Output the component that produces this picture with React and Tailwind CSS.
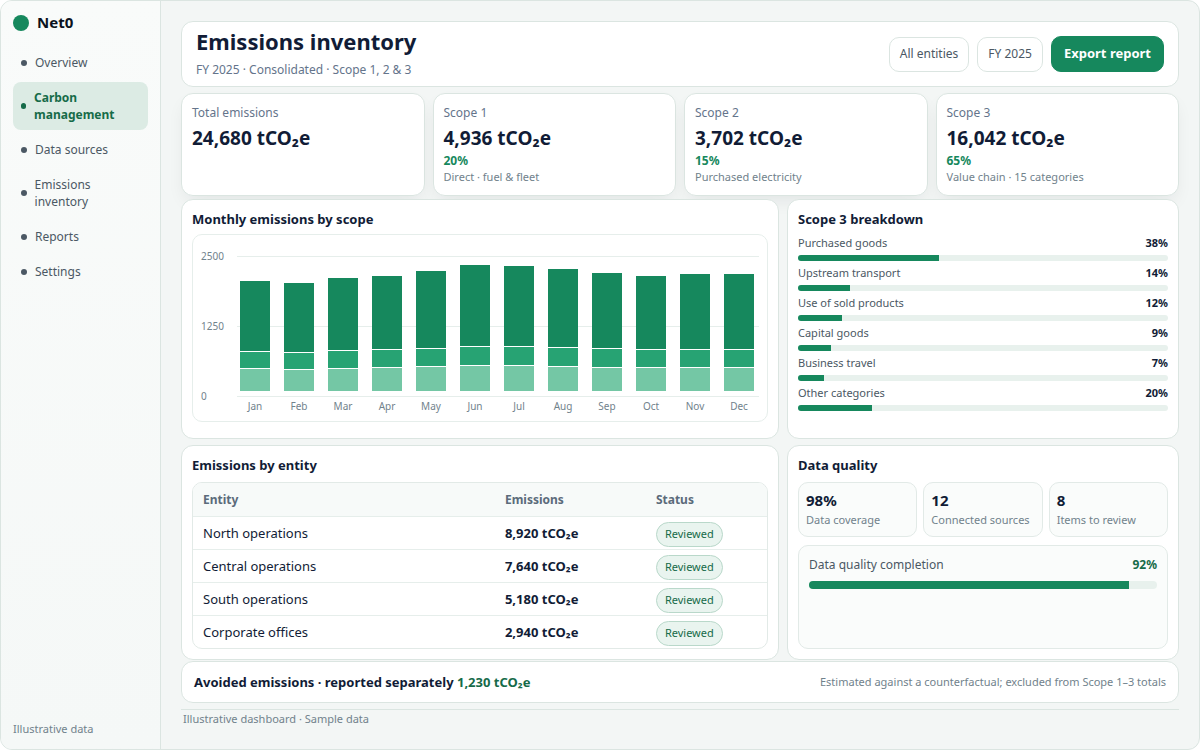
const NAV = [
  { label: 'Overview' },
  { label: 'Carbon management', active: true },
  { label: 'Data sources' },
  { label: 'Emissions inventory' },
  { label: 'Reports' },
  { label: 'Settings' },
];

const KPIS = [
  { label: 'Total emissions', value: '24,680 tCO₂e' },
  { label: 'Scope 1', value: '4,936 tCO₂e', share: '20%', note: 'Direct · fuel & fleet' },
  { label: 'Scope 2', value: '3,702 tCO₂e', share: '15%', note: 'Purchased electricity' },
  { label: 'Scope 3', value: '16,042 tCO₂e', share: '65%', note: 'Value chain · 15 categories' },
];

// segment heights per month: scope 1, scope 2, scope 3
const MONTHS = [
  { name: 'Jan', s1: 22, s2: 16, s3: 70 },
  { name: 'Feb', s1: 21, s2: 16, s3: 69 },
  { name: 'Mar', s1: 22, s2: 17, s3: 72 },
  { name: 'Apr', s1: 23, s2: 17, s3: 73 },
  { name: 'May', s1: 24, s2: 17, s3: 77 },
  { name: 'Jun', s1: 25, s2: 18, s3: 81 },
  { name: 'Jul', s1: 25, s2: 18, s3: 80 },
  { name: 'Aug', s1: 24, s2: 18, s3: 78 },
  { name: 'Sep', s1: 23, s2: 18, s3: 75 },
  { name: 'Oct', s1: 23, s2: 17, s3: 73 },
  { name: 'Nov', s1: 23, s2: 17, s3: 75 },
  { name: 'Dec', s1: 23, s2: 17, s3: 75 },
];

const TICKS = [
  { label: '2500', y: 21 },
  { label: '1250', y: 91 },
  { label: '0', y: 161 },
];

const BREAKDOWN = [
  { label: 'Purchased goods', pct: 38 },
  { label: 'Upstream transport', pct: 14 },
  { label: 'Use of sold products', pct: 12 },
  { label: 'Capital goods', pct: 9 },
  { label: 'Business travel', pct: 7 },
  { label: 'Other categories', pct: 20 },
];

const ENTITIES = [
  { name: 'North operations', value: '8,920 tCO₂e' },
  { name: 'Central operations', value: '7,640 tCO₂e' },
  { name: 'South operations', value: '5,180 tCO₂e' },
  { name: 'Corporate offices', value: '2,940 tCO₂e' },
];

const QUALITY = [
  { value: '98%', label: 'Data coverage' },
  { value: '12', label: 'Connected sources' },
  { value: '8', label: 'Items to review' },
];

const BASE = 156;

function Card({ as: Tag = 'section', className = '', children }) {
  return (
    <Tag className={`bg-white border border-[#dbe5e1] rounded-xl ${className}`}>
      {children}
    </Tag>
  );
}

function PanelTitle({ children }) {
  return <h2 className="text-[13px] leading-[18px] font-bold">{children}</h2>;
}

function Sidebar() {
  return (
    <aside className="w-40 shrink-0 flex flex-col p-3 border-r border-[#dbe5e1] bg-linear-to-b from-[#f9fbfa] to-[#f5f8f7]">
      <div className="flex items-center gap-2 h-5 mb-3.5">
        <span className="w-4 h-4 rounded-full bg-[#16885d]" />
        <span className="self-start text-[15px] leading-[18px] font-bold text-[#0b1220]">Net0</span>
      </div>

      <nav className="flex flex-col gap-1">
        {NAV.map((item) => (
          <a
            key={item.label}
            href="#"
            aria-current={item.active ? 'page' : undefined}
            className={`flex items-center gap-2 px-2 py-[7px] rounded-lg text-xs leading-[17px] ${
              item.active ? 'bg-[#dcebe4] text-[#166b49] font-bold' : 'text-[#4b5864]'
            }`}
          >
            <span className="w-1.5 h-1.5 rounded-full bg-current" />
            <span>{item.label}</span>
          </a>
        ))}
      </nav>

      <p className="mt-auto text-[11px] leading-[17px] text-[#71828c]">Illustrative data</p>
    </aside>
  );
}

function Header() {
  return (
    <Card as="header" className="flex items-center justify-between px-3.5 py-[7px]">
      <div className="pb-px">
        <h1 className="text-[22px] leading-[25px] font-bold">Emissions inventory</h1>
        <p className="mt-[7px] text-xs leading-[17px] text-[#64748b]">FY 2025 · Consolidated · Scope 1, 2 &amp; 3</p>
      </div>
      <div className="flex items-center gap-2">
        <button type="button" className="px-2.5 h-[35px] rounded-[10px] border border-[#dbe5e1] bg-white text-xs text-[#4b5864]">
          All entities
        </button>
        <button type="button" className="px-2.5 h-[35px] rounded-[10px] border border-[#dbe5e1] bg-white text-xs text-[#4b5864]">
          FY 2025
        </button>
        <button type="button" className="px-3 h-9 rounded-[10px] border border-[#16885d] bg-[#16885d] text-[13px] font-bold text-white">
          Export report
        </button>
      </div>
    </Card>
  );
}

function EmissionsChart() {
  return (
    <svg viewBox="0 0 574 186" className="block w-full" role="img" aria-label="Monthly emissions by scope">
      {TICKS.map((t) => (
        <g key={t.label}>
          <rect x="44" y={t.y} width="522" height="1" fill="#e6eeeb" />
          <text x="8" y={t.y + 4} fontSize="10" fill="#71828c">{t.label}</text>
        </g>
      ))}
      {MONTHS.map((m, i) => {
        const x = 47 + i * 44;
        const y1 = BASE - m.s1;
        const y2 = y1 - 1 - m.s2;
        const y3 = y2 - 1 - m.s3;
        return (
          <g key={m.name}>
            <rect x={x} y={y3} width="30" height={BASE - y3} fill="#ffffff" />
            <rect x={x} y={y1} width="30" height={m.s1} fill="#74c7a5" />
            <rect x={x} y={y2} width="30" height={m.s2} fill="#27a373" />
            <rect x={x} y={y3} width="30" height={m.s3} fill="#16885d" />
            <text x={x + 15} y="175" fontSize="10" textAnchor="middle" fill="#71828c">{m.name}</text>
          </g>
        );
      })}
    </svg>
  );
}

export default function App() {
  return (
    <div className="min-h-screen flex rounded-xl border border-[#dbe5e1] bg-[#f3f6f5] overflow-hidden text-[#111c36] font-['Noto_Sans',sans-serif]">
      <Sidebar />

      <main className="flex-1 min-w-0 flex flex-col p-5">
        <Header />

        {/* Headline figures */}
        <div className="grid grid-cols-4 gap-2 mt-1.5">
          {KPIS.map((k) => (
            <Card key={k.label} className="p-2.5 shadow-[0_8px_18px_-4px_rgba(15,23,42,0.08)]">
              <h2 className="text-xs leading-[17px] text-[#64748b]">{k.label}</h2>
              <p className="mt-[3px] text-[19px] leading-[29px] font-bold">{k.value}</p>
              {k.share && (
                <>
                  <p className="text-xs leading-[15px] font-bold text-[#16885d]">{k.share}</p>
                  <p className="mt-px text-[11px] leading-4 text-[#71828c]">{k.note}</p>
                </>
              )}
            </Card>
          ))}
        </div>

        <div className="grid grid-cols-[598fr_392fr] gap-x-2 gap-y-1.5 mt-[3px]">
          <Card className="px-2.5 pt-2.5 pb-4">
            <PanelTitle>Monthly emissions by scope</PanelTitle>
            <div className="mt-1.5 rounded-[10px] border border-[#e6eeeb]">
              <EmissionsChart />
            </div>
          </Card>

          <Card className="p-2.5">
            <PanelTitle>Scope 3 breakdown</PanelTitle>
            <ul className="mt-1.5 flex flex-col gap-[3px]">
              {BREAKDOWN.map((b) => (
                <li key={b.label}>
                  <div className="flex justify-between text-[11px] leading-[17px]">
                    <span className="text-[#4b5864]">{b.label}</span>
                    <strong>{b.pct}%</strong>
                  </div>
                  <div className="mt-1 h-1.5 rounded-full bg-[#e8f1ed] overflow-hidden">
                    <div className="h-full bg-[#16885d]" style={{ width: `${b.pct}%` }} />
                  </div>
                </li>
              ))}
            </ul>
          </Card>

          <Card className="p-2.5">
            <PanelTitle>Emissions by entity</PanelTitle>
            <div className="mt-2 rounded-[10px] border border-[#e2eae7] overflow-hidden">
              <table className="w-full table-fixed border-separate border-spacing-0 text-left text-[13px]">
                <colgroup>
                  <col className="w-[52.6%]" />
                  <col className="w-[26.3%]" />
                  <col />
                </colgroup>
                <thead>
                  <tr className="h-[34px] bg-[#f7faf9] text-xs text-[#5b6b7b]">
                    <th className="px-2.5 border-b border-[#e6eeeb] font-bold">Entity</th>
                    <th className="px-2.5 border-b border-[#e6eeeb] font-bold">Emissions</th>
                    <th className="px-2.5 border-b border-[#e6eeeb] font-bold">Status</th>
                  </tr>
                </thead>
                <tbody className="[&>tr:last-child]:h-8 [&>tr:last-child>td]:border-b-0">
                  {ENTITIES.map((e) => (
                    <tr key={e.name} className="h-[33px]">
                      <td className="px-2.5 pt-px border-b border-[#e6eeeb]">{e.name}</td>
                      <td className="px-2.5 pt-px border-b border-[#e6eeeb] font-bold">{e.value}</td>
                      <td className="px-2.5 pt-[3px] border-b border-[#e6eeeb]">
                        <span className="flex items-center w-fit h-[25px] px-2 rounded-full border border-[#b9d8ca] bg-[#e9f4ef] text-[11px] text-[#166b49]">
                          Reviewed
                        </span>
                      </td>
                    </tr>
                  ))}
                </tbody>
              </table>
            </div>
          </Card>

          <Card className="p-2.5 flex flex-col">
            <PanelTitle>Data quality</PanelTitle>
            <div className="mt-2 grid grid-cols-3 gap-1.5">
              {QUALITY.map((q) => (
                <div key={q.label} className="px-[7px] py-2 rounded-[10px] border border-[#e2eae7] bg-[#fafcfb]">
                  <p className="text-[15px] leading-[18px] font-bold">{q.value}</p>
                  <p className="mt-0.5 text-[11px] leading-[17px] text-[#71828c] whitespace-nowrap">{q.label}</p>
                </div>
              ))}
            </div>
            <div className="mt-2 flex-1 p-2.5 rounded-[10px] border border-[#e2eae7] bg-[#fafcfb]">
              <div className="flex justify-between text-xs leading-[17px]">
                <span className="text-[#4b5864]">Data quality completion</span>
                <strong className="text-[#166b49]">92%</strong>
              </div>
              <div className="mt-2 h-2 rounded-full bg-[#e8f1ed] overflow-hidden">
                <div className="h-full bg-[#16885d]" style={{ width: '92%' }} />
              </div>
            </div>
          </Card>
        </div>

        <Card className="mt-px px-3 py-[11px] flex items-center justify-between">
          <p className="text-[13px] leading-[18px] font-bold">
            Avoided emissions · reported separately <span className="text-[#166b49]">1,230 tCO₂e</span>
          </p>
          <p className="text-[11px] leading-[18px] text-[#71828c]">
            Estimated against a counterfactual; excluded from Scope 1–3 totals
          </p>
        </Card>

        <footer className="mt-1.5 px-0.5 border-t border-[#dbe5e1] text-[11px] leading-[18px] text-[#71828c]">
          Illustrative dashboard · Sample data
        </footer>
      </main>
    </div>
  );
}
